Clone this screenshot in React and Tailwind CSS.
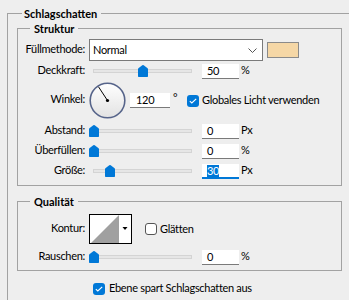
import React from "react";

const Thumb = () => (
  <svg width="10" height="12" viewBox="0 0 10 12">
    <path
      d="M0 4.2 Q0 3.4 0.7 2.9 L4.3 0.3 Q5 -0.1 5.7 0.3 L9.3 2.9 Q10 3.4 10 4.2 V11.3 Q10 12 9.3 12 H0.7 Q0 12 0 11.3 Z"
      fill="#0078d7"
    />
  </svg>
);

const Slider = ({ pos }) => (
  <div className="relative w-[103px] h-[15px] ml-[4px] shrink-0">
    <div className="absolute left-[4px] w-[99px] top-[5px] h-[4px] bg-[#e6e6e6] border border-[#d4d4d4]" />
    <div className={`absolute top-[1px] ${pos}`}>
      <Thumb />
    </div>
  </div>
);

const Field = ({ value, selected }) =>
  selected ? (
    <div className="ml-[10px] w-[37px] h-[15px] bg-white border-b-2 border-[#0078d7] pl-[5px] flex items-center shrink-0">
      <span className="bg-[#0078d7] text-white leading-[12px]">{value}</span>
    </div>
  ) : (
    <div className="ml-[10px] w-[37px] h-[15px] bg-white border-b border-[#7a7a7a] pl-[5px] flex items-center shrink-0">
      {value}
    </div>
  );

const Label = ({ children }) => (
  <div className="w-[67px] shrink-0 text-right mb-[2px]">{children}</div>
);

const Check = ({ checked }) =>
  checked ? (
    <div className="w-[12px] h-[12px] rounded-[3px] bg-[#0078d7] flex items-center justify-center shrink-0">
      <svg width="8" height="6" viewBox="0 0 8 6">
        <path d="M0.8 3.2 L2.8 5 L7.2 0.8" stroke="white" strokeWidth="1.1" fill="none" />
      </svg>
    </div>
  ) : (
    <div className="w-[12px] h-[12px] rounded-[3px] bg-white border border-[#555] shrink-0" />
  );

const Row = ({ children, cls }) => (
  <div className={`flex items-center ${cls}`}>{children}</div>
);

export default function App() {
  return (
    <div
      className="relative w-[349px] h-[300px] overflow-hidden bg-[#eeeeee] text-[11px] text-black tracking-[-0.3px]"
      style={{ fontFamily: 'Lato, sans-serif' }}
    >
      <div className="ml-[7px] mt-[13px] border-l border-t border-[#a2a2a2] w-[360px] h-[300px]">
        <div className="-mt-[8px] ml-[14px] w-fit pl-[2px] pr-[4px] bg-[#eeeeee] font-bold leading-[15px] tracking-normal">
          Schlagschatten
        </div>

        {/* Struktur */}
        <div className="ml-[9px] mt-[7px] w-[325px] h-[158px] border border-[#a2a2a2]">
          <div className="-mt-[8px] ml-[12px] w-fit px-[4px] bg-[#eeeeee] font-bold leading-[15px] tracking-normal">
            Struktur
          </div>

          <Row cls="mt-[3px] h-[22px]">
            <Label>Füllmethode:</Label>
            <div className="ml-[4px] w-[174px] h-[22px] bg-white border border-[#7a7a7a] flex items-center justify-between pl-[3px] pr-[5px] shrink-0">
              <span>Normal</span>
              <svg width="9" height="5" viewBox="0 0 9 5">
                <path d="M0.5 0.5 L4.5 4.5 L8.5 0.5" stroke="#555" strokeWidth="1" fill="none" />
              </svg>
            </div>
            <div className="ml-[4px] w-[32px] h-[16px] bg-[#f5d7a6] border border-[#8a8a8a] shrink-0" />
          </Row>

          <Row cls="mt-[3px] h-[15px]">
            <Label>Deckkraft:</Label>
            <Slider pos="left-[49px]" />
            <Field value="50" />
            <span className="ml-[2px] mb-[2px]">%</span>
          </Row>

          <Row cls="mt-[3px] h-[37px]">
            <Label>Winkel:</Label>
            <div className="ml-[4px] w-[37px] h-[37px] shrink-0">
              <svg width="37" height="37" viewBox="0 0 37 37">
                <defs>
                  <linearGradient id="dg" x1="0" y1="0" x2="0" y2="1">
                    <stop offset="0" stopColor="#ffffff" />
                    <stop offset="1" stopColor="#e2e2e2" />
                  </linearGradient>
                </defs>
                <circle cx="18.5" cy="18.5" r="17.3" fill="url(#dg)" stroke="#56648a" strokeWidth="1.6" />
                <line x1="18.5" y1="18.5" x2="9.5" y2="4.8" stroke="#000" strokeWidth="1" />
                <circle cx="18.5" cy="18.5" r="1.6" fill="#000" />
              </svg>
            </div>
            <div className="ml-[4px] w-[40px] h-[15px] bg-white border-b border-[#7a7a7a] pl-[6px] flex items-center shrink-0">
              120
            </div>
            <span className="w-[17px] pl-[3px] mb-[5px] shrink-0">°</span>
            <Check checked />
            <span className="ml-[3px]">Globales Licht verwenden</span>
          </Row>

          <Row cls="mt-[5px] h-[15px]">
            <Label>Abstand:</Label>
            <Slider pos="left-0" />
            <Field value="0" />
            <span className="ml-[2px] mb-[2px]">Px</span>
          </Row>

          <Row cls="mt-[5px] h-[15px]">
            <Label>Überfüllen:</Label>
            <Slider pos="left-0" />
            <Field value="0" />
            <span className="ml-[2px] mb-[2px]">%</span>
          </Row>

          <Row cls="mt-[5px] h-[15px]">
            <Label>Größe:</Label>
            <Slider pos="left-[16px]" />
            <Field value="30" selected />
            <span className="ml-[2px] mb-[2px]">Px</span>
          </Row>
        </div>

        {/* Qualität */}
        <div className="ml-[9px] mt-[15px] w-[325px] h-[70px] border border-[#a2a2a2]">
          <div className="-mt-[8px] ml-[12px] w-fit px-[4px] bg-[#eeeeee] font-bold leading-[15px] tracking-normal">
            Qualität
          </div>

          <Row cls="mt-[5px] h-[30px]">
            <Label>Kontur:</Label>
            <div className="ml-[4px] w-[43px] h-[30px] shrink-0">
              <svg width="43" height="30" viewBox="0 0 43 30">
                <rect x="0.5" y="0.5" width="42" height="29" fill="#fff" stroke="#000" />
                <polygon points="2,29 30,1 30,29" fill="#a0a0a0" />
                <polygon points="33.5,13 38.5,13 36,16" fill="#000" />
              </svg>
            </div>
            <div className="ml-[13px]">
              <Check />
            </div>
            <span className="ml-[3px]">Glätten</span>
          </Row>

          <Row cls="mt-[6px] h-[15px]">
            <Label>Rauschen:</Label>
            <Slider pos="left-0" />
            <Field value="0" />
            <span className="ml-[2px] mb-[2px]">%</span>
          </Row>
        </div>

        <Row cls="mt-[11px] h-[13px] ml-[85px]">
          <Check checked />
          <span className="ml-[4px]">Ebene spart Schlagschatten aus</span>
        </Row>
      </div>
    </div>
  );
}
